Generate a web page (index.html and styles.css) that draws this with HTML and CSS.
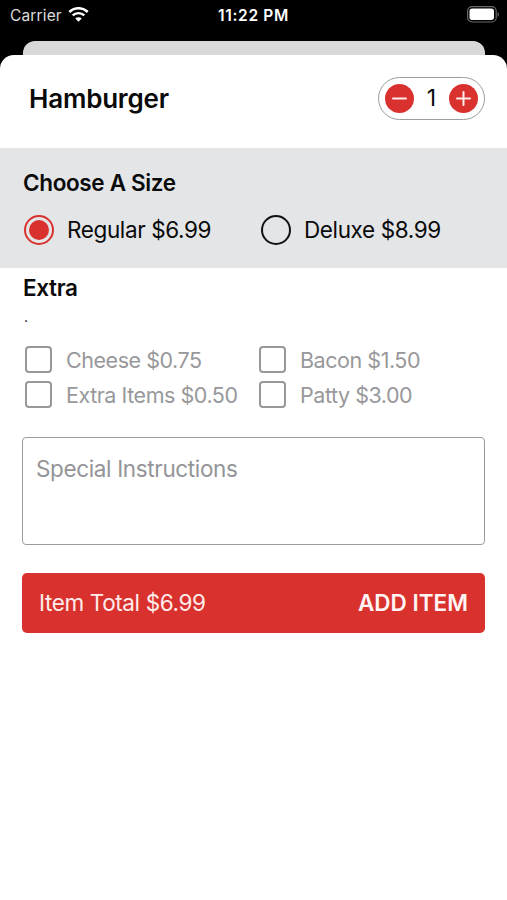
FILE: index.html
```html
<!DOCTYPE html>
<html lang="en">
<head>
  <meta charset="UTF-8" />
  <meta name="viewport" content="width=device-width, initial-scale=1.0" />
  <title>Hamburger</title>
  <link rel="stylesheet" href="styles.css">
</head>
<body>
  <div class="status-bar">
    <div class="carrier">
      <span>Carrier</span>
      <svg class="wifi" width="21" height="15" viewBox="0 0 21 15">
        <path d="M1.3 5a13.2 13.2 0 0 1 18.4 0" fill="none" stroke="#fff" stroke-width="2.6" />
        <path d="M4.7 8.4a8.4 8.4 0 0 1 11.6 0" fill="none" stroke="#fff" stroke-width="2.4" />
        <path d="M10.5 14.8l-3.2-3.2a4.6 4.6 0 0 1 6.4 0z" fill="#fff" />
      </svg>
    </div>
    <div class="time">11:22 PM</div>
    <svg class="battery" width="33" height="17" viewBox="0 0 33 17">
      <rect x="0.6" y="0.6" width="28.6" height="15.4" rx="4.5" fill="none" stroke="#6a6a6a" stroke-width="1.2" />
      <rect x="2.5" y="2.5" width="24.5" height="11.4" rx="2.6" fill="#fff" />
      <path d="M30.6 6v5c1.8-.8 1.8-4.2 0-5z" fill="#6a6a6a" />
    </svg>
  </div>
  <div class="back-card"></div>
  <main class="sheet">
    <header class="item-header">
      <h1>Hamburger</h1>
      <div class="stepper">
        <button class="step" aria-label="Decrease">
          <svg width="29" height="29" viewBox="0 0 29 29"><path d="M8 14.5h13" /></svg>
        </button>
        <span class="count">1</span>
        <button class="step" aria-label="Increase">
          <svg width="29" height="29" viewBox="0 0 29 29"><path d="M8 14.5h13M14.5 8v13" /></svg>
        </button>
      </div>
    </header>
    <section class="sizes">
      <h2>Choose A Size</h2>
      <div class="size-options">
        <label class="size"><input type="radio" name="size" checked><span>Regular $6.99</span></label>
        <label class="size"><input type="radio" name="size"><span>Deluxe $8.99</span></label>
      </div>
    </section>
    <section class="extras">
      <h2>Extra</h2>
      <p class="note">.</p>
      <div class="extra-options">
        <label class="extra"><input type="checkbox"><span>Cheese $0.75</span></label>
        <label class="extra"><input type="checkbox"><span>Bacon $1.50</span></label>
        <label class="extra"><input type="checkbox"><span>Extra Items $0.50</span></label>
        <label class="extra"><input type="checkbox"><span>Patty $3.00</span></label>
      </div>
    </section>
    <textarea class="instructions" placeholder="Special Instructions"></textarea>
    <button class="add-item">
      <span class="total">Item Total $6.99</span>
      <span class="add">ADD ITEM</span>
    </button>
  </main>
</body>
</html>
```
FILE: styles.css
```css
* { box-sizing: border-box; }
body {
  margin: 0;
  min-height: 900px;
  display: flex;
  flex-direction: column;
  background: #000;
  color: #0a0a0a;
  font-family: Inter, 'Liberation Sans', sans-serif;
}
h1, h2, p { margin: 0; }
button {
  border: none;
  padding: 0;
  font-family: inherit;
  cursor: pointer;
}
.status-bar {
  display: grid;
  grid-template-columns: 1fr auto 1fr;
  align-items: center;
  height: 30px;
  padding: 0 7px 0 10px;
  color: #fff;
}
.carrier {
  display: flex;
  align-items: center;
  gap: 6px;
  font-size: 15.5px;
  letter-spacing: 0.15px;
  color: #ddd;
}
.wifi {
  margin-top: -1px;
}
.time {
  font-size: 15.5px;
  font-weight: 600;
  letter-spacing: 0.65px;
  margin-right: 3px;
}
.battery {
  justify-self: end;
  margin-top: -1px;
}
.back-card {
  height: 14px;
  margin: 11px 22px 0 23px;
  background: #d9d9d9;
  border-radius: 12px 12px 0 0;
}
.sheet {
  flex: 1;
  background: #fff;
  border-radius: 14px 14px 0 0;
}
.item-header {
  display: flex;
  justify-content: space-between;
  align-items: center;
  height: 93px;
  padding: 0 22px 7px 29px;
}
h1 {
  font-size: 26px;
  font-weight: 600;
  letter-spacing: -0.2px;
}
.stepper {
  display: flex;
  justify-content: space-between;
  align-items: center;
  width: 107px;
  height: 43px;
  padding: 0 6px;
  border: 1.5px solid #9a9c9e;
  border-radius: 22px;
}
.step {
  width: 29px;
  height: 29px;
  border-radius: 50%;
  background: #d9322e;
}
.step svg {
  display: block;
  fill: none;
  stroke: #ffeceb;
  stroke-width: 2;
  stroke-linecap: round;
}
.count {
  font-size: 23px;
}
h2 {
  font-size: 22.5px;
  font-weight: 600;
  line-height: 28px;
  letter-spacing: -0.35px;
}
.sizes {
  height: 120px;
  padding: 21px 23px 0;
  background: #e3e5e7;
}
.size-options {
  display: grid;
  grid-template-columns: 237px 1fr;
  margin-top: 18px;
  padding-left: 1px;
}
.size {
  display: flex;
  align-items: center;
  gap: 13px;
  height: 30px;
  font-size: 22.5px;
  line-height: 26px;
  letter-spacing: -0.38px;
}
.size span {
  margin-top: -1px;
}
input {
  appearance: none;
  flex: none;
  margin: 0;
  background: transparent;
}
.size input {
  width: 30px;
  height: 30px;
  border: 2px solid #111;
  border-radius: 50%;
}
.size input:checked {
  border-color: #d9322e;
  background: #d9322e;
  background-clip: content-box;
  padding: 3px;
}
.extras {
  padding: 6px 23px 0;
}
.note {
  height: 20px;
  padding-left: 1px;
  font-size: 14px;
  line-height: 30px;
}
.extra-options {
  display: grid;
  grid-template-columns: 234px 1fr;
  margin-top: 20px;
  padding-left: 2px;
}
.extra {
  display: flex;
  align-items: center;
  gap: 14px;
  height: 35px;
  font-size: 21.5px;
  letter-spacing: -0.46px;
  color: #98989a;
}
.extra input {
  width: 27px;
  height: 27px;
  border: 2px solid #98989a;
  border-radius: 4px;
}
.instructions {
  display: block;
  width: 463px;
  height: 108px;
  margin: 25px 0 0 22px;
  padding: 17px 13px;
  border: 1.5px solid #9b9b9b;
  border-radius: 4px;
  resize: none;
  font-family: inherit;
  font-size: 22.5px;
  line-height: 28px;
  letter-spacing: -0.36px;
}
.instructions::placeholder {
  color: #949497;
}
.add-item {
  display: flex;
  justify-content: space-between;
  align-items: center;
  width: 463px;
  height: 60px;
  margin: 28px 0 0 22px;
  padding: 0 17px 2px;
  border-radius: 5px;
  background: #d9322e;
  color: #ffeceb;
  font-size: 22.5px;
}
.total {
  letter-spacing: -0.38px;
}
.add {
  font-weight: 600;
  color: #fff5f4;
}
```
